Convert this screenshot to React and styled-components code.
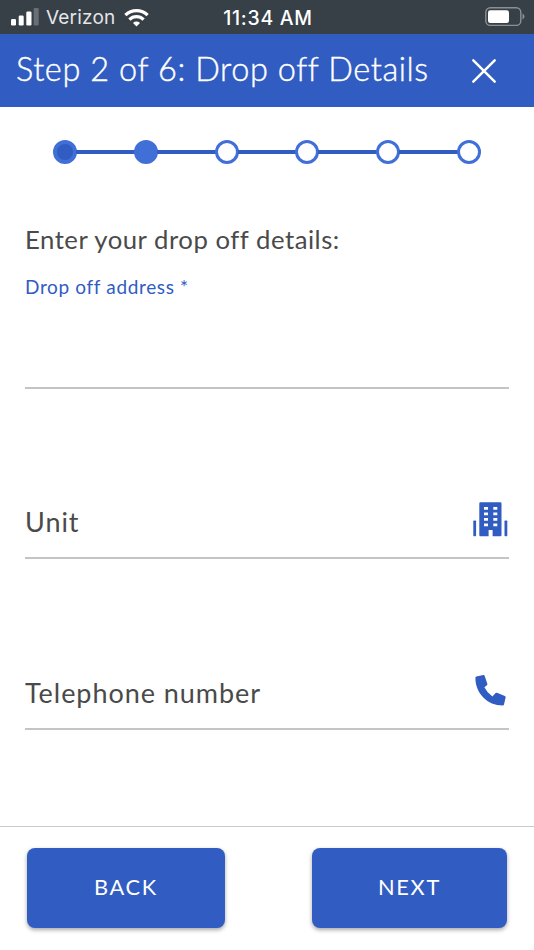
import React from 'react'
import styled, { createGlobalStyle, ThemeProvider } from 'styled-components'

const theme = {
  fontPrimary: 'Lato, "Open Sans", sans-serif',
  fontSystem: 'Inter, Roboto, sans-serif',
  palette: {
    primary: '#315cc2',
    primaryLight: '#416fd8',
    dark: '#373f47',
    text: '#4a4a4a',
    line: '#c4c4c4',
    white: '#ffffff',
  },
}

const GlobalStyle = createGlobalStyle`
  * {
    box-sizing: border-box;
  }
  body {
    margin: 0;
    background: #fff;
  }
`
const Screen = styled.div`
  display: flex;
  flex-direction: column;
  width: 534px;
  height: 950px;
  overflow: hidden;
  color: ${(props) => props.theme.palette.text};
  font-family: ${(props) => props.theme.fontPrimary};
  background-color: ${(props) => props.theme.palette.white};
`
const StatusBar = styled.div`
  display: grid;
  grid-template-columns: 1fr auto 1fr;
  align-items: center;
  height: 34px;
  padding: 0 9px 0 11px;
  color: ${(props) => props.theme.palette.white};
  font-family: ${(props) => props.theme.fontSystem};
  background-color: ${(props) => props.theme.palette.dark};
`
const Carrier = styled.div`
  display: flex;
  align-items: center;
`
const CarrierName = styled.span`
  margin: 1px 8px 0 7px;
  color: #e4e6e8;
  font-size: 19px;
  line-height: 24px;
  letter-spacing: 0.2px;
`
const Clock = styled.span`
  padding-top: 2px;
  font-size: 19.4px;
  font-weight: 500;
  line-height: 24px;
  letter-spacing: 0.75px;
`
const BatterySlot = styled.div`
  display: flex;
  justify-content: flex-end;
`
const Header = styled.header`
  display: flex;
  justify-content: space-between;
  align-items: center;
  height: 73px;
  padding: 0 37px 0 16px;
  color: ${(props) => props.theme.palette.white};
  background-color: ${(props) => props.theme.palette.primary};
`
const Title = styled.h1`
  margin: 0;
  padding-bottom: 3px;
  font-size: 32.5px;
  font-weight: 300;
  line-height: 40px;
  letter-spacing: 0.57px;
  white-space: nowrap;
  -webkit-text-stroke: 0.4px currentColor;
`
const CloseButton = styled.button`
  display: flex;
  padding: 0;
  border: none;
  background: none;
  cursor: pointer;
`
const Steps = styled.div`
  display: flex;
  align-items: center;
  margin: 32.5px 53px 0;
  height: 24px;
`
const Dot = styled.div`
  flex: none;
  width: 24px;
  height: 24px;
  border: ${(props) => (props.$state === 'done' ? 4 : 3)}px solid ${(props) => props.theme.palette.primaryLight};
  border-radius: 50%;
  background-color: ${(props) => ({
    done: props.theme.palette.primary,
    current: props.theme.palette.primaryLight,
    todo: props.theme.palette.white,
  })[props.$state]};
`
const Track = styled.div`
  flex: 1;
  height: 4px;
  margin: 0 -1px;
  background-color: ${(props) => props.theme.palette.primary};
`
const Form = styled.main`
  flex: 1;
  padding: 58.5px 25px 0;
`
const Intro = styled.p`
  margin: 0;
  font-size: 25.7px;
  line-height: 34px;
  letter-spacing: 0.53px;
  white-space: nowrap;
`
const AddressField = styled.div`
  height: 133px;
  padding-top: 19px;
  border-bottom: 2px solid ${(props) => props.theme.palette.line};
`
const FloatingLabel = styled.label`
  display: block;
  color: ${(props) => props.theme.palette.primary};
  font-size: 19px;
  line-height: 24px;
  letter-spacing: 0.65px;
`
const Field = styled.div`
  display: flex;
  justify-content: space-between;
  align-items: flex-end;
  height: ${(props) => props.$height}px;
  padding-bottom: 18px;
  border-bottom: 2px solid ${(props) => props.theme.palette.line};
`
const FieldLabel = styled.label`
  font-size: 27px;
  line-height: 34px;
  letter-spacing: 0.95px;
`
const FieldIcon = styled.span`
  display: flex;
  margin: ${(props) => props.$margin};
  color: ${(props) => props.theme.palette.primary};
`
const Footer = styled.footer`
  display: flex;
  justify-content: space-between;
  height: 124px;
  padding: 21px 27px 0;
  border-top: 1px solid #cacaca;
`
const Button = styled.button`
  width: ${(props) => props.$width}px;
  height: 80px;
  padding: 0 0 3px;
  color: ${(props) => props.theme.palette.white};
  font-family: ${(props) => props.theme.fontPrimary};
  font-size: 21.8px;
  letter-spacing: 1.7px;
  border: none;
  border-radius: 8px;
  background-color: ${(props) => props.theme.palette.primary};
  box-shadow: 0 2px 4px rgba(0, 0, 0, 0.35);
  cursor: pointer;
`

const SignalIcon = () => (
  <svg width="28" height="18" viewBox="0 0 28 18" fill="#fff">
    <rect x="0" y="11" width="5" height="6.5" rx="1.3" />
    <rect x="7.7" y="7.5" width="5" height="10" rx="1.3" />
    <rect x="15.3" y="3.5" width="5.2" height="14" rx="1.3" />
    <rect x="22.7" y="0" width="5" height="17.5" rx="1.3" opacity="0.25" />
  </svg>
)

const WifiIcon = () => (
  <svg width="25" height="19" viewBox="0 0 25 19" fill="none" stroke="#fff" strokeWidth="3.3">
    <path d="M1.4 7.2a15.8 15.8 0 0 1 22.2 0" />
    <path d="M5.4 11.6a10.2 10.2 0 0 1 14.2 0" />
    <path d="M12.5 18.5l-3.5-3.6a5 5 0 0 1 7 0z" fill="#fff" stroke="none" />
  </svg>
)

const BatteryIcon = () => (
  <svg width="40" height="20" viewBox="0 0 40 20">
    <rect x="0.8" y="0.8" width="35" height="17.6" rx="4.5" fill="none" stroke="#8b9095" strokeWidth="1.4" />
    <rect x="3" y="3.2" width="21" height="12.8" rx="2.3" fill="#fff" />
    <path d="M37.5 6.5q2 1 2 3t-2 3z" fill="#8b9095" />
  </svg>
)

const CloseIcon = () => (
  <svg width="26" height="26" viewBox="0 0 26 26" stroke="#fff" strokeWidth="2.5" strokeLinecap="round">
    <path d="M2.3 2.3l21.4 21.4M23.7 2.3L2.3 23.7" />
  </svg>
)

const BuildingIcon = () => (
  <svg width="35" height="35" viewBox="0 0 35 35" fill="currentColor">
    <rect x="0.3" y="18.5" width="2.8" height="15.7" rx="0.7" />
    <rect x="31.5" y="18.5" width="2.8" height="15.7" rx="0.7" />
    <path
      fillRule="evenodd"
      d="M7.5 0.3h19.8a1.2 1.2 0 0 1 1.2 1.2v31.5a1.2 1.2 0 0 1-1.2 1.2h-7.7v-6.2h-4v6.2H7.5a1.2 1.2 0 0 1-1.2-1.2V1.5a1.2 1.2 0 0 1 1.2-1.2z
      M11 5v2.8h4V5zM20.3 5v2.8h4V5zM11 10.5v2.8h4v-2.8zM20.3 10.5v2.8h4v-2.8z
      M11 16v2.8h4V16zM20.3 16v2.8h4V16zM11 21.5v2.8h4v-2.8zM20.3 21.5v2.8h4v-2.8z"
    />
  </svg>
)

const PhoneIcon = () => (
  <svg width="31" height="31" viewBox="0 0 31 31" fill="currentColor">
    <path d="M1.3 1.6L8.3 0.1q1-.2 1.4.8l2.6 7.8q.3.9-.4 1.5L9.4 12.300q2.800 5.700 8 9.300l3.200-3.500q.6-.7 1.400-.3l7.800 3.200q1 .4.8 1.400l-1.600 7q-.2 1.100-1.300 1.100C12.500 30.500.4 18.500.4 3q0-1.200.9-1.400z" />
  </svg>
)

const STEPS = ['done', 'current', 'todo', 'todo', 'todo', 'todo']

const App = () => (
  <ThemeProvider theme={theme}>
    <GlobalStyle />
    <Screen>
      <StatusBar>
        <Carrier>
          <SignalIcon />
          <CarrierName>Verizon</CarrierName>
          <WifiIcon />
        </Carrier>
        <Clock>11:34 AM</Clock>
        <BatterySlot>
          <BatteryIcon />
        </BatterySlot>
      </StatusBar>
      <Header>
        <Title>Step 2 of 6: Drop off Details</Title>
        <CloseButton aria-label="Close">
          <CloseIcon />
        </CloseButton>
      </Header>
      <Steps>
        {STEPS.map((state, index) => (
          <React.Fragment key={index}>
            {index > 0 && <Track />}
            <Dot $state={state} />
          </React.Fragment>
        ))}
      </Steps>
      <Form>
        <Intro>Enter your drop off details:</Intro>
        <AddressField>
          <FloatingLabel>Drop off address *</FloatingLabel>
        </AddressField>
        <Field $height={170}>
          <FieldLabel>Unit</FieldLabel>
          <FieldIcon $margin="0 1px 2px 0">
            <BuildingIcon />
          </FieldIcon>
        </Field>
        <Field $height={171}>
          <FieldLabel>Telephone number</FieldLabel>
          <FieldIcon $margin="0 3px 4px 0">
            <PhoneIcon />
          </FieldIcon>
        </Field>
      </Form>
      <Footer>
        <Button $width={198}>BACK</Button>
        <Button $width={195}>NEXT</Button>
      </Footer>
    </Screen>
  </ThemeProvider>
)

export default App
